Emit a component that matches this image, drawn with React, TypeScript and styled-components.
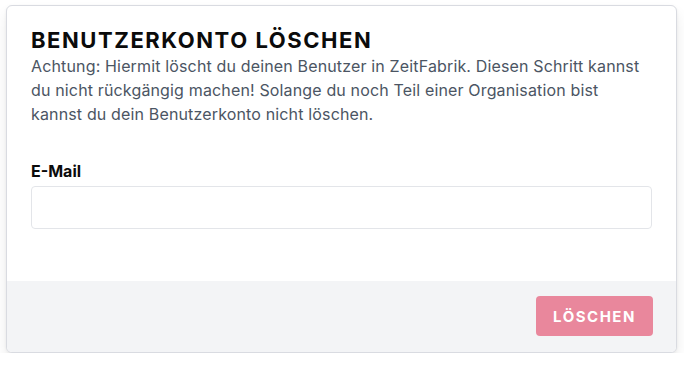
import React from "react";
import styled, { createGlobalStyle } from "styled-components";

const GlobalStyle = createGlobalStyle`
  html, body {
    margin: 0;
    padding: 0;
    background: #ffffff;
    font-family: "Inter", "Noto Sans", sans-serif;
  }
`;

const Page = styled.div`
  padding: 5px 7px 0 6px;
`;

const Card = styled.form`
  border: 1px solid #d9dbe1;
  border-radius: 6px;
  background: #ffffff;
  overflow: hidden;
  box-shadow: 0 8px 14px rgba(0, 0, 0, 0.08), 0 1px 3px rgba(0, 0, 0, 0.06);
`;

const Body = styled.div`
  padding: 20px 24px 52px 24px;
`;

const Title = styled.h2`
  margin: 0;
  font-size: 22px;
  line-height: 28px;
  font-weight: 700;
  letter-spacing: 1.55px;
  color: #0b0b0b;
`;

const Text = styled.p`
  margin: 0;
  font-size: 16px;
  line-height: 24px;
  letter-spacing: 0.15px;
  color: #4b5563;
`;

const Field = styled.label`
  display: flex;
  flex-direction: column;
  gap: 5px;
  margin-top: 35px;
`;

const LabelText = styled.span`
  font-size: 16px;
  line-height: 20px;
  font-weight: 700;
  color: #0b0b0b;
`;

const Input = styled.input`
  box-sizing: border-box;
  height: 43px;
  width: 100%;
  border: 1px solid #e3e5e9;
  border-radius: 4px;
  padding: 0 12px;
  font: inherit;
  outline: none;
`;

const Footer = styled.div`
  display: flex;
  justify-content: flex-end;
  background: #f3f4f6;
  padding: 15px 23px 16px 24px;
`;

const DeleteButton = styled.button`
  height: 40px;
  width: 117px;
  border: none;
  border-radius: 4px;
  background: #e9879c;
  color: #ffffff;
  font-family: inherit;
  font-size: 15px;
  font-weight: 700;
  letter-spacing: 1.5px;
`;

export default function App() {
  return (
    <>
      <GlobalStyle />
      <Page>
        <Card onSubmit={(e) => e.preventDefault()}>
          <Body>
            <Title>BENUTZERKONTO LÖSCHEN</Title>
            <Text>
              Achtung: Hiermit löscht du deinen Benutzer in ZeitFabrik. Diesen
              Schritt kannst du nicht rückgängig machen! Solange du noch Teil
              einer Organisation bist kannst du dein Benutzerkonto nicht
              löschen.
            </Text>
            <Field>
              <LabelText>E-Mail</LabelText>
              <Input type="email" />
            </Field>
          </Body>
          <Footer>
            <DeleteButton type="submit" disabled>
              LÖSCHEN
            </DeleteButton>
          </Footer>
        </Card>
      </Page>
    </>
  );
}
